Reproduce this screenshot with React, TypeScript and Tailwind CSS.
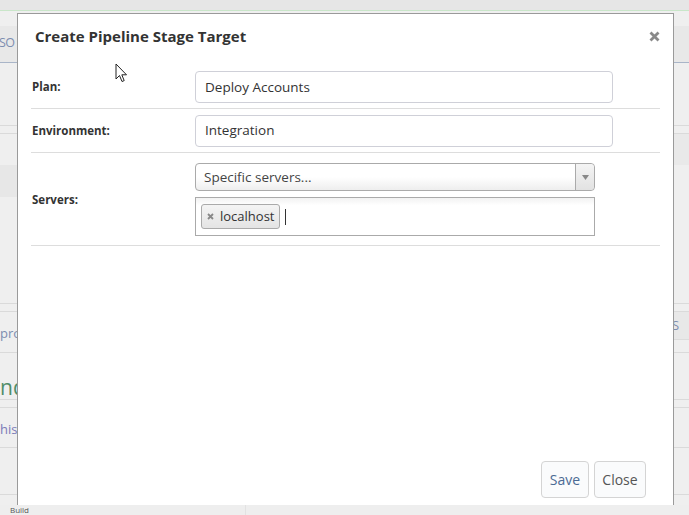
import React from "react";

const font = { fontFamily: '"Open Sans", "Liberation Sans", sans-serif' };

function Cursor() {
  return (
    <svg width="14" height="21" viewBox="0 0 14 21" className="absolute left-[115px] top-[63px]">
      <path d="M1 1 L1 16 L4.5 12.5 L7 18.5 L9.2 17.6 L6.8 11.8 L11.5 11.8 Z" fill="#fff" stroke="#222" strokeWidth="1" strokeLinejoin="round" />
    </svg>
  );
}

function Background() {
  return (
    <div className="flex flex-col w-full h-full text-[#7d8db0]">
      <div className="h-[11px] bg-[#e6e6e6] border-b border-[#c9e6c9]" />
      <div className="h-[15px]" />
      <div className="h-[37px] bg-[#e8e8e8] border-b border-[#a9b5c8] flex items-center text-[12.5px] tracking-[-0.5px] pb-[2px]">
        <span className="-ml-[1px]">SO</span>
      </div>
      <div className="h-[62px]" />
      <div className="h-[9px] border-t border-[#dadada] border-b" />
      <div className="h-[31px] flex justify-end">
        <div className="w-[20px] bg-[#e9e9e9]" />
      </div>
      <div className="h-[32px] flex">
        <div className="w-[20px] bg-[#e7e7e7]" />
      </div>
      <div className="h-[106px]" />
      <div className="h-[9px] border-t border-[#dadada] border-b" />
      <div className="h-[40px] flex justify-between text-[13px]">
        <div className="flex items-center pt-[3px]">
          <span>prov</span>
        </div>
        <div className="w-[20px] h-[28px] bg-[#e8e8e8] border-b border-[#dcdcdc] flex items-center pl-[3px]">
          <span>S</span>
        </div>
      </div>
      <div className="h-[47px] border-t border-[#dadada] flex items-start pt-[20px] leading-[28px] text-[21px] text-[#4f8d6a]">
        <span>nd</span>
      </div>
      <div className="h-[9px] border-t border-[#dadada] border-b" />
      <div className="h-[39px] flex items-center pt-[4px] text-[13px] text-[#7b7bb8]">
        <span>his</span>
      </div>
      <div className="h-[47px] border-t border-[#dadada]" />
      <div className="h-[11px] border-t border-[#dadada]" />
      <div className="flex-1 bg-[#eeeeee] flex">
        <div className="w-[246px] border-r border-[#e2e2e2] text-[8px] text-[#555] pl-[10px] pt-[1px] leading-[8px]">Build</div>
      </div>
    </div>
  );
}

function Row({ label, children, className }: { label: string; children: React.ReactNode; className: string }) {
  return (
    <div className={"flex items-center border-b border-[#dddddd] " + className}>
      <div className="w-[164px] pl-[1px] text-[11.5px] font-bold text-[#333]">{label}</div>
      <div className="flex flex-col gap-[6px]">{children}</div>
    </div>
  );
}

export default function App() {
  return (
    <div className="relative w-[689px] h-[515px] overflow-hidden bg-[#efefef]" style={font}>
      <Background />
      <div className="absolute left-[17px] top-[13px] w-[657px] h-[492px] bg-white border border-b-0 border-[#9a9a9a] flex flex-col">
        <div className="h-[51px] flex items-start justify-between pl-[17px] pr-[13px] pt-[12px]">
          <h1 className="text-[15px] leading-[20px] font-bold text-[#333]">Create Pipeline Stage Target</h1>
          <svg width="11" height="11" viewBox="0 0 11 11" className="mt-[5px]">
            <path d="M1.5 1.5 L9.5 9.5 M9.5 1.5 L1.5 9.5" stroke="#8a8a8a" strokeWidth="2.8" />
          </svg>
        </div>
        <div className="mx-[13px] flex flex-col">
          <Row label="Plan:" className="h-[44px] pt-[1px]">
            <div className="w-[418px] h-[32px] border border-[#cfd0d8] rounded-[4px] flex items-center pl-[9px] text-[13.5px] text-[#333]">Deploy Accounts</div>
          </Row>
          <Row label="Environment:" className="h-[44px]">
            <div className="w-[418px] h-[32px] border border-[#cfd0d8] rounded-[4px] flex items-center pl-[9px] text-[13.5px] text-[#333]">Integration</div>
          </Row>
          <Row label="Servers:" className="h-[93px] pt-[1px]">
            <div className="w-[400px] h-[28px] border border-[#aaaaaa] rounded-[4px] flex bg-gradient-to-b from-white from-50% to-[#eeeeee]">
              <div className="flex-1 flex items-center pl-[8px] text-[13.5px] text-[#444]">Specific servers...</div>
              <div className="w-[19px] border-l border-[#aaaaaa] flex items-center justify-center bg-gradient-to-b from-[#f4f4f4] to-[#e2e2e2] rounded-r-[4px]">
                <svg width="7" height="5" viewBox="0 0 7 5"><path d="M0 0 L7 0 L3.5 5 Z" fill="#888" /></svg>
              </div>
            </div>
            <div className="w-[400px] h-[39px] border border-[#aaaaaa] flex items-center pl-[5px] gap-[5px] bg-gradient-to-b from-[#f2f2f2] from-0% to-white to-20%">
              <div className="h-[25px] px-[5px] border border-[#aaaaaa] rounded-[3px] flex items-center gap-[6px] bg-gradient-to-b from-[#f4f4f4] to-[#e4e4e4] text-[13px] text-[#333]">
                <svg width="7" height="7" viewBox="0 0 7 7">
                  <path d="M1 1 L6 6 M6 1 L1 6" stroke="#888" strokeWidth="1.8" />
                </svg>
                <span>localhost</span>
              </div>
              <div className="w-px h-[16px] bg-[#333]" />
            </div>
          </Row>
        </div>
        <div className="flex-1" />
        <div className="flex justify-end gap-[5px] pr-[27px] pb-[7px]">
          <button className="w-[48px] h-[37px] border border-[#d4d4d4] rounded-[4px] bg-[#fafbfc] text-[14px] text-[#4b6a94]">Save</button>
          <button className="w-[52px] h-[37px] border border-[#d4d4d4] rounded-[4px] bg-[#fafbfc] text-[14px] text-[#555]">Close</button>
        </div>
      </div>
      <Cursor />
    </div>
  );
}
